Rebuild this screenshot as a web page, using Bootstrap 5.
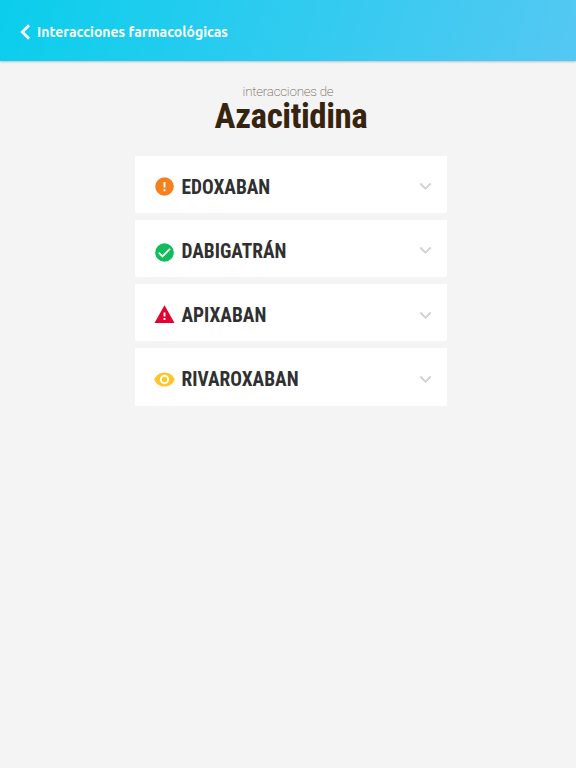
<!DOCTYPE html>
<html lang="es">
<head>
<meta charset="utf-8">
<meta name="viewport" content="width=device-width, initial-scale=1">
<title>Interacciones farmacológicas</title>
<link href="https://cdn.jsdelivr.net/npm/bootstrap@5.3.0/dist/css/bootstrap.min.css" rel="stylesheet">
<style>
body { background: #f4f4f4; font-family: Roboto, sans-serif; }
.topbar { height: 61px; padding: 2px 0 0 20px; background: linear-gradient(105deg, #0bceec, #54c8f3); box-shadow: 0 1px 2px rgba(0,0,0,.22); }
.topbar-title { font: 700 14px/20px Ubuntu, "Noto Sans", sans-serif; margin-left: 7px; white-space: nowrap; }
.results { width: 312px; margin-left: 135px; padding-top: 22px; }
.eyebrow { font-size: 13.4px; font-weight: 200; line-height: 17px; letter-spacing: -.25px; color: #74685a; padding-right: 6px; }
.condensed { font-family: "Roboto Condensed", Roboto, sans-serif; font-stretch: 75%; font-weight: 700; white-space: nowrap; }
.drug { font-size: 35px; letter-spacing: -.45px; line-height: 34px; color: #37240f; }
.stack { gap: 6.7px; margin-top: 21.5px; }
.entry { height: 57.5px; border-radius: 1px; padding: 5px 15px 0 19px; }
.entry-name { font-size: 19.4px; line-height: 24px; color: #303030; margin-left: 6.5px; padding-top: 2.2px; }
</style>
</head>
<body>
<header class="topbar d-flex align-items-center text-white">
  <svg width="10" height="16" viewBox="0 0 10 16" fill="none" stroke="#fff" stroke-width="2.7"><path d="M9 1.3 2.3 8 9 14.7"/></svg>
  <h1 class="topbar-title mb-0"><span>Interacciones farmacológicas</span></h1>
</header>
<main class="results">
  <div class="text-center">
    <div class="eyebrow"><span>interacciones de</span></div>
    <h2 class="condensed drug mb-0"><span>Azacitidina</span></h2>
  </div>
  <div class="stack d-flex flex-column">
    <div class="entry bg-white d-flex align-items-center">
      <svg width="21" height="21" viewBox="0 0 21 21"><circle cx="10.5" cy="10.5" r="9.3" fill="#f6801f"/><path d="M10.5 5.9v5.5M10.5 13.3v1.9" stroke="#fff" stroke-width="1.9"/></svg>
      <span class="condensed entry-name">EDOXABAN</span>
      <svg class="ms-auto" width="13" height="9" viewBox="0 0 13 9" fill="none" stroke="#d2d2d2" stroke-width="2"><path d="m1.3 1.5 5.2 5.2 5.2-5.2"/></svg>
    </div>
    <div class="entry bg-white d-flex align-items-center">
      <svg class="mt-1" width="21" height="21" viewBox="0 0 21 21"><circle cx="10.5" cy="10.5" r="9.3" fill="#10bc5c"/><path d="m4.8 10.7 3.7 3.7 7.5-7.5" fill="none" stroke="#fff" stroke-width="1.8"/></svg>
      <span class="condensed entry-name">DABIGATRÁN</span>
      <svg class="ms-auto" width="13" height="9" viewBox="0 0 13 9" fill="none" stroke="#d2d2d2" stroke-width="2"><path d="m1.3 1.5 5.2 5.2 5.2-5.2"/></svg>
    </div>
    <div class="entry bg-white d-flex align-items-center">
      <svg width="21" height="21" viewBox="0 0 21 21"><path d="M.5 17.9h20L10.5.2z" fill="#e4002f"/><path d="M10.5 7.4v4M10.5 13.100v1.9" stroke="#fff" stroke-width="1.9"/></svg>
      <span class="condensed entry-name">APIXABAN</span>
      <svg class="ms-auto" width="13" height="9" viewBox="0 0 13 9" fill="none" stroke="#d2d2d2" stroke-width="2"><path d="m1.3 1.5 5.2 5.2 5.2-5.2"/></svg>
    </div>
    <div class="entry bg-white d-flex align-items-center">
      <svg width="21" height="21" viewBox="0 0 21 21"><path d="M.2 10.5C1.9 6.2 5.8 3.4 10.5 3.4s8.6 2.8 10.3 7.1c-1.7 4.3-5.6 7.1-10.3 7.1S1.9 14.8.2 10.5z" fill="#ffc629"/><circle cx="10.5" cy="10.5" r="3.7" fill="#ffc629" stroke="#fff" stroke-width="1.9"/></svg>
      <span class="condensed entry-name">RIVAROXABAN</span>
      <svg class="ms-auto" width="13" height="9" viewBox="0 0 13 9" fill="none" stroke="#d2d2d2" stroke-width="2"><path d="m1.3 1.5 5.2 5.2 5.2-5.2"/></svg>
    </div>
  </div>
</main>
<script src="https://cdn.jsdelivr.net/npm/bootstrap@5.3.0/dist/js/bootstrap.bundle.min.js"></script>
</body>
</html>
